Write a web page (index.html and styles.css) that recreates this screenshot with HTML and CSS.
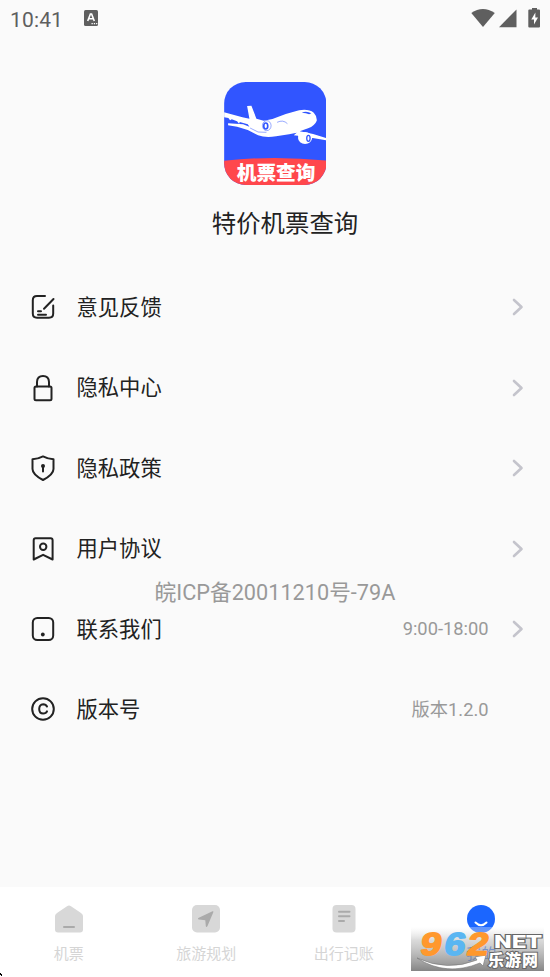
FILE: index.html
```html
<!DOCTYPE html>
<html lang="zh-CN">
<head>
<meta charset="utf-8">
<title>特价机票查询</title>
<link rel="stylesheet" href="styles.css">
</head>
<body>
<div class="screen">
  <header class="status">
    <span class="clock">10:41</span>
    <svg class="ime" width="14" height="16" viewBox="0 0 14 16"><rect width="14" height="16" rx="1.500" fill="#5f5f5f"/><path d="M3.700 11 6.400 4h1.200l2.700 7M4.800 8.800h4.400" fill="none" stroke="#fff" stroke-width="1.600"/><path d="M7.500 13.600h1.300m1 0h1.300m1 0h1.200" stroke="#fff" stroke-width="1.300"/></svg>
    <svg class="signals" width="70" height="20" viewBox="0 0 70 20" fill="#5f5f5f"><path d="M1.300 5Q12.800-2.800 24.800 5L13 19Z"/><path d="M46.500 1.500V19.200H29Z"/><path d="M59.300 1.500H62V0h5v1.500h2q1 0 1 1v16q0 1-1 1H59.300q-1 0-1-1v-16q0-1 1-1Z"/><path d="m65.400 4.500-4.100 7h2.700v5l4-7h-2.700Z" fill="#fff"/></svg>
  </header>

  <section class="brand">
    <svg class="logo" viewBox="15 12 307 309">
      <defs><clipPath id="tile"><rect x="15" y="12" width="307" height="309" rx="65"/></clipPath></defs>
      <g clip-path="url(#tile)">
        <rect x="15" y="12" width="307" height="309" fill="#3155ff"/>
        <path d="M15 248Q165 232 322 248V321H15Z" fill="#ff474c"/>
        <path d="M15 103 70 118 91 122 84 84 97 83 112 122 134 128 160 123 200 108 240 97Q268 92 284 104 294 114 293 128 287 143 267 151L242 160 282 168 322 180V187L281 180 240 186 237 173 224 172 233 164 210 169 171 175Q139 180 117 172L86 156 54 146 27 142V136L72 139 91 146 86 139 62 132 60 137 54 130 38 124 33 127 28 120 15 118Z" fill="#fff"/>
        <ellipse cx="258" cy="180" rx="21" ry="18" fill="#fff"/>
        <path d="M248 104q14-7 29 2l-7 3q-8-5-22-5" fill="#3155ff"/>
        <path d="M93 150l24 12 25 1M174 133q18-9 31 4" fill="none" stroke="#3155ff" stroke-width="1.500"/>
        <ellipse cx="143" cy="143" rx="13" ry="15" fill="#fff" stroke="#3155ff" stroke-width="1.500"/>
        <ellipse cx="140" cy="144" rx="6" ry="9" fill="#fff" stroke="#3155ff" stroke-width="5"/>
        <ellipse cx="268" cy="181" rx="5" ry="9" fill="#fff" stroke="#3155ff" stroke-width="4"/>
      </g>
      <text class="logo-text" x="53" y="305" textLength="236">机票查询</text>
    </svg>
    <h1>特价机票查询</h1>
  </section>

  <main class="menu">
    <div class="row">
      <svg class="icon" viewBox="0 0 26 28"><path d="M15 3H7Q2.800 3 2.800 7.200V20.600Q2.800 24.800 7 24.800H19Q23.200 24.800 23.200 20.600V12.500M23.500 6 14 15.800M8 18.200H11M8 21.700H16"/></svg>
      <span class="name">意见反馈</span><svg class="arrow" viewBox="0 0 12 18"><path d="m2 2 7.500 7L2 16"/></svg>
    </div>
    <div class="row">
      <svg class="icon" viewBox="0 0 26 28"><rect x="4.500" y="12.500" width="17" height="13.700" rx="1.500"/><path d="M7 12.500V8Q7.200 2 13 2T19 8V12.500"/></svg>
      <span class="name">隐私中心</span><svg class="arrow" viewBox="0 0 12 18"><path d="m2 2 7.500 7L2 16"/></svg>
    </div>
    <div class="row">
      <svg class="icon" viewBox="0 0 26 28"><path d="M13 2.400Q18 5 23.500 5.300V15Q23.500 20.500 13 26 2.500 20.500 2.500 15V5.300Q8 5 13 2.400ZM13 13.500V17.500"/><circle class="dot" cx="13" cy="12" r="2"/></svg>
      <span class="name">隐私政策</span><svg class="arrow" viewBox="0 0 12 18"><path d="m2 2 7.500 7L2 16"/></svg>
    </div>
    <div class="row">
      <svg class="icon" viewBox="0 0 26 28"><path d="M3.700 24.500V5.200Q3.700 3.300 5.600 3.300H20.700Q22.600 3.300 22.600 5.200V24.500L13.100 19.800Z"/><circle cx="13.200" cy="11.700" r="3.200"/></svg>
      <span class="name">用户协议</span><svg class="arrow" viewBox="0 0 12 18"><path d="m2 2 7.500 7L2 16"/></svg>
    </div>
    <div class="row">
      <svg class="icon" viewBox="0 0 26 28"><rect x="2.800" y="3" width="20.400" height="22" rx="4.500"/><circle class="dot" cx="12.800" cy="19.500" r="1.900"/></svg>
      <span class="name">联系我们</span><span class="value">9:00-18:00</span><svg class="arrow" viewBox="0 0 12 18"><path d="m2 2 7.500 7L2 16"/></svg>
    </div>
    <div class="row">
      <svg class="icon" viewBox="0 0 26 28"><circle cx="13" cy="14" r="10.800"/><path d="M17 11.500Q16 9.200 13.200 9.200 9.200 9.500 9.200 14T13.200 18.600Q16 18.600 17 16.400"/></svg>
      <span class="name">版本号</span><span class="value last">版本1.2.0</span>
    </div>
    <p class="icp">皖ICP备20011210号-79A</p>
  </main>

  <nav class="tabs">
    <div class="tab"><svg viewBox="0 0 28 28"><path d="M2 8 12 1.200Q14 0 16 1.200L26 8Q28 9.300 28 11V24.500Q28 27.500 25 27.500H3Q0 27.500 0 24.500V11Q0 9.300 2 8Z" fill="#d8d8d8"/><path d="M9 22H19" stroke="#aaa" stroke-width="2" stroke-linecap="round"/></svg><span>机票</span></div>
    <div class="tab"><svg viewBox="0 0 28 28"><rect width="28" height="27.500" rx="5" fill="#d8d8d8"/><path d="M20.500 6.300Q21.800 6 21.300 7.300L15.500 21Q14.400 23 13.800 21L13.300 15.200 7 14.600Q5 14 6.800 12.800Z" fill="#aaa"/></svg><span>旅游规划</span></div>
    <div class="tab"><svg viewBox="0 0 28 28"><rect x="2.500" width="23" height="27.500" rx="4" fill="#d8d8d8"/><path d="M9 6.700H19.500M9 11.200H19.500M9 16H14" stroke="#aaa" stroke-width="2" stroke-linecap="round"/></svg><span>出行记账</span></div>
    <div class="tab active"><svg viewBox="0 0 28 28"><circle cx="14" cy="14" r="14" fill="#1b66ff"/><path d="M8.500 17.500Q14 23 19.500 17.500" fill="none" stroke="#fff" stroke-width="2" stroke-linecap="round"/></svg><span>我的</span></div>
  </nav>

  <svg class="speck" width="3" height="4" viewBox="0 0 3 4"><path d="M0 0h1v1h1v2H1V2H0Z"/></svg>
  <svg class="stamp" width="139" height="50" viewBox="0 0 139 50">
    <defs>
      <linearGradient id="shade" x1="0" y1="0" x2="0" y2="1"><stop offset="0" stop-color="#fff" stop-opacity=".3"/><stop offset=".3" stop-color="#bbb" stop-opacity=".55"/><stop offset="1" stop-color="#777" stop-opacity=".9"/></linearGradient>
    </defs>
    <rect y="2" width="133" height="44" fill="url(#shade)"/>
    <path d="M6 33Q36 47 66 35L64 32 75 30 72 41 69 38Q35 52 6 33Z" fill="#fff" stroke="#777" stroke-width=".6"/>
    <g class="digits" transform="translate(8 29.500) skewX(-10)"><text class="warm" x="0" y="0" textLength="21" lengthAdjust="spacingAndGlyphs">9</text><text class="cool" x="24" y="0" textLength="21" lengthAdjust="spacingAndGlyphs">6</text><text class="warm" x="47" y="0" textLength="21" lengthAdjust="spacingAndGlyphs">2</text></g>
    <text class="net" x="83" y="23" textLength="48" lengthAdjust="spacingAndGlyphs">NET</text>
    <text class="site" x="77" y="41" textLength="50">乐游网</text>
  </svg>
</div>
</body>
</html>
```

FILE: styles.css
```css
* { box-sizing: border-box; }
body { margin: 0; font-family: Roboto, "Noto Sans CJK SC", sans-serif; }
.screen { position: relative; width: 550px; height: 977px; display: flex; flex-direction: column; overflow: hidden; background: #fafafa; color: #222; }
.status { height: 40px; flex: none; display: flex; align-items: flex-start; padding: 8px 10px 0; color: #5f5f5f; }
.clock { width: 74px; font-size: 21px; line-height: 24px; letter-spacing: .15px; }
.ime { margin-top: 2px; }
.signals { margin-left: auto; }
.brand { height: 227px; flex: none; display: flex; flex-direction: column; align-items: center; padding-top: 42px; }
.logo { width: 102.500px; height: 103px; flex: none; }
.logo-text { font: 900 59px "Noto Sans CJK SC", sans-serif; fill: #fff; }
h1 { margin: 20px 0 0 20px; font-weight: 400; font-size: 24.400px; line-height: 38px; }
.menu { position: relative; flex: 1; }
.row { height: 80.450px; display: flex; align-items: center; padding: 0 26.500px 0 30px; }
.icon { width: 26px; height: 28px; flex: none; fill: none; stroke: #222; stroke-width: 2; stroke-linecap: round; stroke-linejoin: round; }
.icon .dot { fill: #222; stroke: none; }
.name { margin: 1.500px 0 0 20.500px; font-size: 21.300px; line-height: 30px; }
.arrow { width: 12px; height: 18px; margin-left: auto; fill: none; stroke: #c4c4cc; stroke-width: 2.600; stroke-linecap: round; stroke-linejoin: round; }
.value { margin-left: auto; color: #999; font-size: 18.300px; }
.value + .arrow { margin-left: 23px; }
.last { margin: -2px 35px 0 auto; }
.icp { position: absolute; left: 0; right: 0; top: 311px; margin: 0; text-align: center; color: #999; font-size: 21.700px; line-height: 30px; }
.tabs { height: 90px; flex: none; display: flex; background: #fff; }
.tab { flex: 1; display: flex; flex-direction: column; align-items: center; padding-top: 18px; color: #d5d5d5; font-size: 15px; line-height: 22px; }
.tab svg { width: 28px; height: 28px; }
.tab span { margin-top: 10px; }
.active { color: #1b66ff; }
.speck { position: absolute; left: 0; bottom: 0; }
.stamp { position: absolute; left: 411px; top: 925px; }
.digits { font: 700 32px "Liberation Sans", sans-serif; stroke-width: 1.500px; stroke-linejoin: round; }
.warm { fill: #ff982d; stroke: #ff982d; }
.cool { fill: #5ab6f2; stroke: #5ab6f2; }
.net { font: 900 19px Roboto, sans-serif; fill: #fff; stroke: #666; stroke-width: 2px; paint-order: stroke; }
.site { font: 900 16px "Noto Sans CJK SC", sans-serif; fill: #fff; stroke: #666; stroke-width: 2px; paint-order: stroke; }
```
